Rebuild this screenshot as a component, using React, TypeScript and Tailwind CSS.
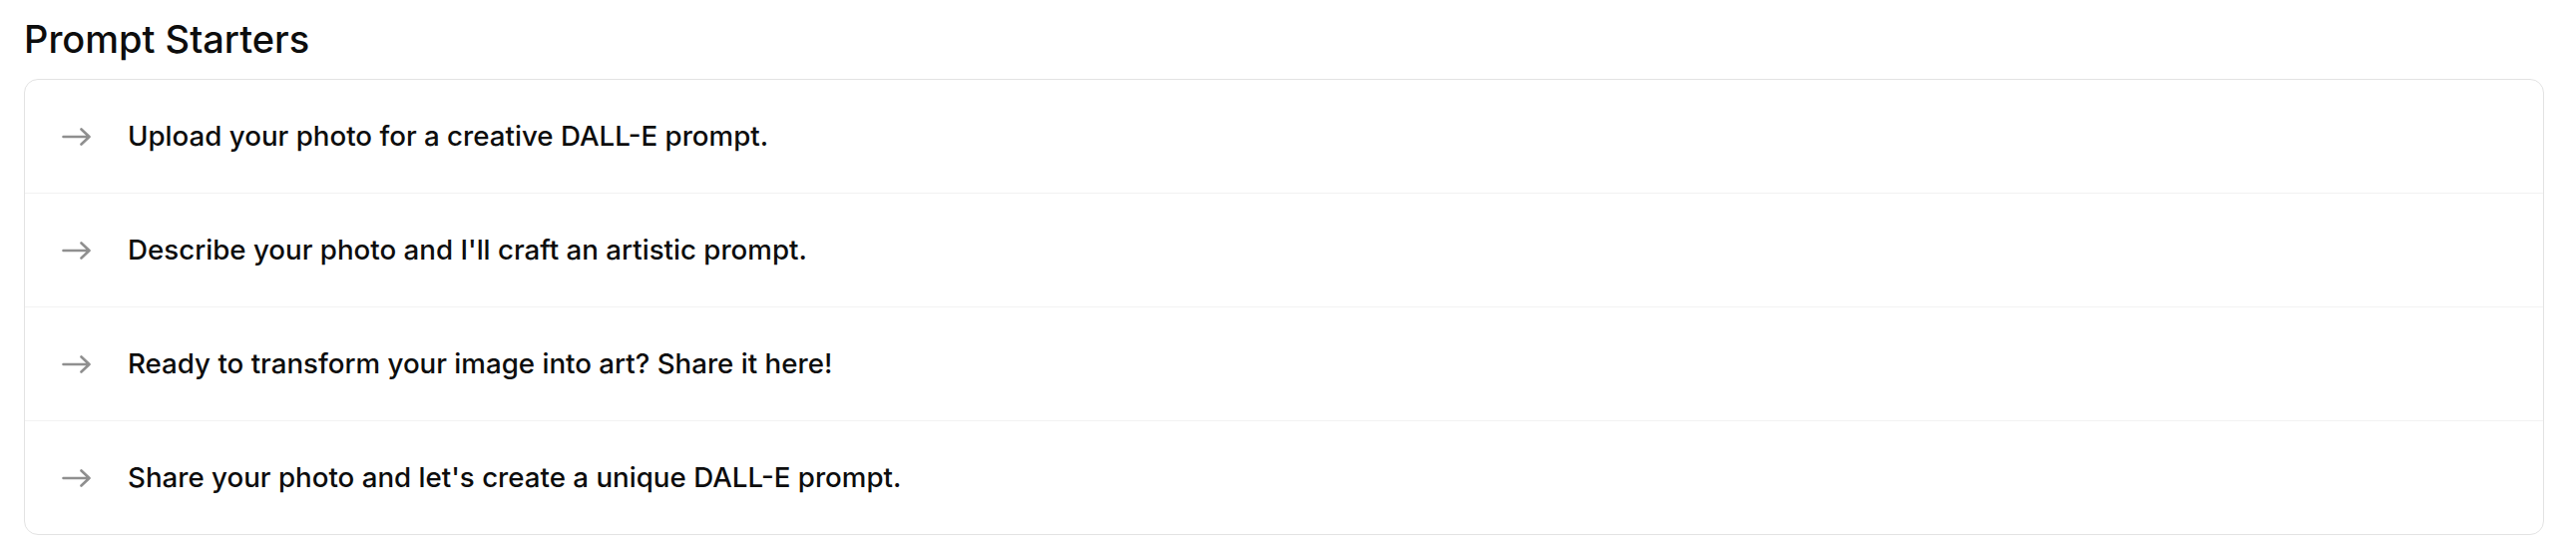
const starters = [
  "Upload your photo for a creative DALL-E prompt.",
  "Describe your photo and I'll craft an artistic prompt.",
  "Ready to transform your image into art? Share it here!",
  "Share your photo and let's create a unique DALL-E prompt.",
];

function Arrow() {
  return (
    <svg width="29" height="18" viewBox="0 0 29 18" fill="none" className="shrink-0">
      <path
        d="M1.5 9H27.5M19.5 1.5L27.5 9L19.5 16.5"
        stroke="#8f8f8f"
        strokeWidth="2.6"
        strokeLinecap="round"
        strokeLinejoin="round"
      />
    </svg>
  );
}

export default function App() {
  return (
    <div className="min-h-screen bg-white pl-6 pr-8 pt-4 font-['Inter',sans-serif] text-[#0d0d0d]">
      <h2 className="text-[38px] leading-[46px] font-medium mb-[17px]">Prompt Starters</h2>
      <div className="rounded-[14px] border border-[#e3e3e3] bg-white">
        {starters.map((s, i) => (
          <div
            key={i}
            className={
              "flex items-center gap-[37px] pl-[37px] py-9 " +
              (i > 0 ? "border-t border-[#f2f2f2]" : "")
            }
          >
            <Arrow />
            <span className="text-[27.7px] leading-[41px] font-medium">{s}</span>
          </div>
        ))}
      </div>
    </div>
  );
}
